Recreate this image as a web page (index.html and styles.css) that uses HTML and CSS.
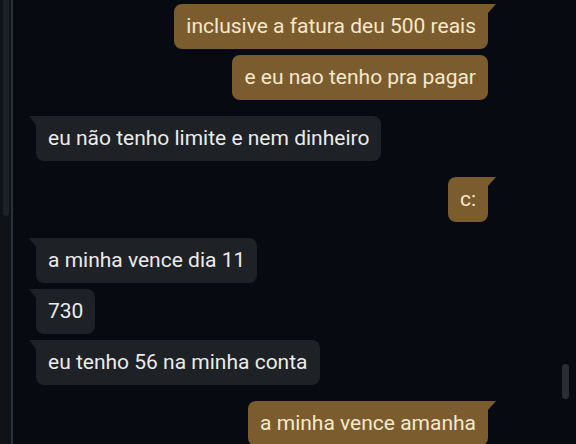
FILE: index.html
```html
<!DOCTYPE html>
<html lang="pt">
<head>
<meta charset="utf-8">
<link rel="stylesheet" href="styles.css">
</head>
<body>
<div class="app">
  <div class="side"><div class="side-thumb"></div></div>
  <div class="chat">
    <div class="group out">
      <div class="msg first">inclusive a fatura deu 500 reais</div>
      <div class="msg">e eu nao tenho pra pagar</div>
    </div>
    <div class="group in">
      <div class="msg first">eu não tenho limite e nem dinheiro</div>
    </div>
    <div class="group out">
      <div class="msg first">c:</div>
    </div>
    <div class="group in">
      <div class="msg first">a minha vence dia 11</div>
      <div class="msg first">730</div>
      <div class="msg first">eu tenho 56 na minha conta</div>
    </div>
    <div class="group out">
      <div class="msg first">a minha vence amanha</div>
    </div>
    <div class="scroll-thumb"></div>
  </div>
</div>
</body>
</html>
```
FILE: styles.css
```css
html, body {
  margin: 0;
  padding: 0;
  background: #070b11;
  height: 444px;
  overflow: hidden;
}
.app {
  display: flex;
  height: 444px;
  font-family: Roboto, "Liberation Sans", sans-serif;
}
.side {
  width: 13px;
  background: #0f1318;
  border-right: 2px solid #2a3038;
  padding-left: 3px;
  box-sizing: border-box;
  flex: none;
}
.side-thumb {
  width: 6px;
  height: 216px;
  background: #1d2229;
  border-radius: 0 0 3px 3px;
}
.chat {
  flex: 1;
  position: relative;
  padding: 4px 88px 0 23px;
  display: flex;
  flex-direction: column;
  gap: 16px;
}
.group {
  display: flex;
  flex-direction: column;
  gap: 6px;
}
.group.out { align-items: flex-end; }
.group.in { align-items: flex-start; }
.msg {
  position: relative;
  font-size: 21px;
  line-height: 25px;
  padding: 10px 12px 10px 12px;
  border-radius: 8px;
  white-space: nowrap;
}
.out .msg {
  background: #7a5c2f;
  color: #f6e8cb;
}
.in .msg {
  background: #1e2125;
  color: #ebebeb;
}
.out .msg.first { border-top-right-radius: 0; }
.in .msg.first { border-top-left-radius: 0; }
.out .msg.first::after {
  content: "";
  position: absolute;
  top: 0;
  right: -8px;
  border-top: 9px solid #7a5c2f;
  border-right: 8px solid transparent;
}
.in .msg.first::after {
  content: "";
  position: absolute;
  top: 0;
  left: -7px;
  border-top: 9px solid #1e2125;
  border-left: 7px solid transparent;
}
.scroll-thumb {
  position: absolute;
  right: 7px;
  top: 364px;
  width: 7px;
  height: 35px;
  border-radius: 4px;
  background: #2a2e34;
}
```
